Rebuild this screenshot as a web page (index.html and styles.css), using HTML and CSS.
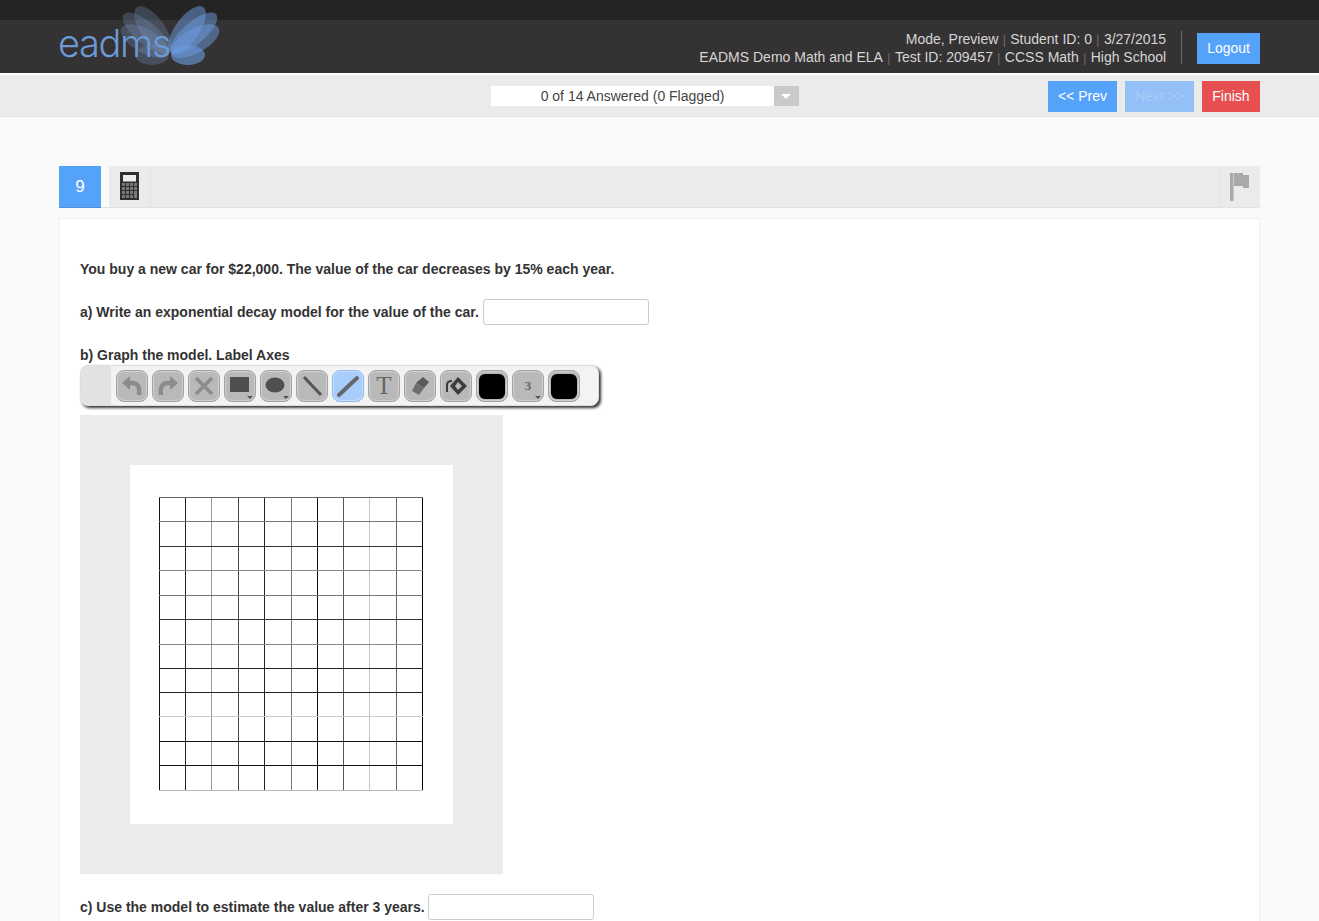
FILE: index.html
```html
<!DOCTYPE html>
<html lang="en">
<head>
    <meta charset="UTF-8">
    <meta name="viewport" content="width=device-width, initial-scale=1.0">
    <title>EADMS Test</title>
    <link rel="stylesheet" href="styles.css">
</head>
<body>
    <div class="topStrip"></div>
    <header class="mainHeader">
        <div class="logo">
            <svg class="logoWings" width="104" height="70" viewBox="120 0 104 70">
                <g fill="#7f9fd2" opacity="0.9">
                    <ellipse cx="153" cy="30" rx="12" ry="28" opacity="0.3" transform="rotate(-35 153 30)"/>
                    <ellipse cx="146" cy="33" rx="11" ry="29" opacity="0.3" transform="rotate(-50 146 33)"/>
                    <ellipse cx="145" cy="41" rx="12" ry="27" opacity="0.3" transform="rotate(-61 145 41)"/>
                    <ellipse cx="152" cy="55" rx="17" ry="10" opacity="0.3"/>
                </g>
                <g fill="#6b9ce0">
                    <ellipse cx="187" cy="30" rx="12" ry="28" opacity="0.5" transform="rotate(35 187 30)"/>
                    <ellipse cx="194" cy="33" rx="11" ry="29" opacity="0.5" transform="rotate(50 194 33)"/>
                    <ellipse cx="195" cy="41" rx="12" ry="27" opacity="0.5" transform="rotate(61 195 41)"/>
                    <ellipse cx="188" cy="55" rx="17" ry="10" opacity="0.6"/>
                </g>
            </svg>
            <span class="logoText">eadms</span>
        </div>
        <div class="headerRight">
            <div class="testMeta">
                <div>Mode, Preview<span class="sep">|</span>Student ID: 0<span class="sep">|</span>3/27/2015</div>
                <div>EADMS Demo Math and ELA<span class="sep">|</span>Test ID: 209457<span class="sep">|</span>CCSS Math<span class="sep">|</span>High School</div>
            </div>
            <div class="headerDivider"></div>
            <button class="btn btnBlue">Logout</button>
        </div>
    </header>

    <div class="navBar">
        <div class="answeredSelect">
            <span class="answeredText">0 of 14 Answered (0 Flagged)</span>
            <span class="selectArrow"></span>
        </div>
        <div class="navButtons">
            <button class="btn btnBlue">&lt;&lt; Prev</button>
            <button class="btn btnDisabled">Next &gt;&gt;</button>
            <button class="btn btnRed">Finish</button>
        </div>
    </div>

    <main class="content">
        <div class="tabBar">
            <div class="tabNumber">9</div>
            <div class="tabTool">
                <svg width="19" height="28" viewBox="0 0 19 28">
                    <rect width="19" height="28" fill="#2f2f2f"/>
                    <rect x="3" y="3" width="13" height="6.500" fill="#ececec"/>
                    <g fill="#777">
                        <rect x="2" y="11" width="3" height="3"/><rect x="6" y="11" width="3" height="3"/><rect x="10" y="11" width="3" height="3"/><rect x="14" y="11" width="3" height="3"/>
                        <rect x="2" y="15" width="3" height="3"/><rect x="6" y="15" width="3" height="3"/><rect x="10" y="15" width="3" height="3"/><rect x="14" y="15" width="3" height="3"/>
                        <rect x="2" y="19" width="3" height="3"/><rect x="6" y="19" width="3" height="3"/><rect x="10" y="19" width="3" height="3"/><rect x="14" y="19" width="3" height="7"/>
                        <rect x="2" y="23" width="3" height="3"/><rect x="6" y="23" width="3" height="3"/><rect x="10" y="23" width="3" height="3"/>
                    </g>
                </svg>
            </div>
            <div class="tabFlag">
                <svg width="20" height="28" viewBox="0 0 20 28">
                    <rect x="0" y="0" width="3.500" height="28" fill="#a9a9a9"/>
                    <path d="M4 0H13V2H19V15H13V13H4Z" fill="#a9a9a9"/>
                </svg>
            </div>
        </div>

        <section class="questionCard">
            <p class="questionText">You buy a new car for $22,000. The value of the car decreases by 15% each year.</p>
            <p class="questionText partA">a) Write an exponential decay model for the value of the car. <input type="text" class="answerInput"></p>
            <p class="questionText partB">b) Graph the model. Label Axes</p>

            <div class="drawToolbar">
                <div class="toolbarHandle"></div>
                <div class="toolBtn">
                    <svg width="24" height="24" viewBox="0 0 24 24"><path d="M2 9L10 2V16Z" fill="#8c8c8c"/><path d="M8 9H12C18 9 20 13 19 21" stroke="#8c8c8c" stroke-width="4.500" fill="none"/></svg>
                </div>
                <div class="toolBtn">
                    <svg width="24" height="24" viewBox="0 0 24 24"><path d="M22 9L14 2V16Z" fill="#8c8c8c"/><path d="M16 9H12C6 9 4 13 5 21" stroke="#8c8c8c" stroke-width="4.500" fill="none"/></svg>
                </div>
                <div class="toolBtn">
                    <svg width="24" height="24" viewBox="0 0 24 24"><path d="M4 4L20 20M20 4L4 20" stroke="#8c8c8c" stroke-width="3.500" fill="none"/></svg>
                </div>
                <div class="toolBtn hasMenu">
                    <svg width="24" height="24" viewBox="0 0 24 24"><rect x="2" y="3" width="19" height="15" fill="#4f4f4f"/></svg>
                </div>
                <div class="toolBtn hasMenu">
                    <svg width="24" height="24" viewBox="0 0 24 24"><ellipse cx="11" cy="11" rx="9.500" ry="7.500" fill="#4f4f4f"/></svg>
                </div>
                <div class="toolBtn">
                    <svg width="24" height="24" viewBox="0 0 24 24"><path d="M4 3L21 21" stroke="#555" stroke-width="3" fill="none"/></svg>
                </div>
                <div class="toolBtn toolActive">
                    <svg width="24" height="24" viewBox="0 0 24 24"><path d="M3 21L21 4" stroke="#666" stroke-width="4" stroke-linecap="round" fill="none"/></svg>
                </div>
                <div class="toolBtn toolLabel toolLetter">T</div>
                <div class="toolBtn">
                    <svg width="24" height="24" viewBox="0 0 24 24"><path d="M15 3L21 8L16 14L8 9Z" fill="#5a5a5a"/><path d="M8 9L16 14L11 21L4 17Z" fill="#6e6e6e"/></svg>
                </div>
                <div class="toolBtn">
                    <svg width="24" height="24" viewBox="0 0 24 24"><path d="M14 3L23 12L14 21L6 12ZM14 8L11 12L14 16L18 12Z" fill-rule="evenodd" fill="#3c3c3c"/><path d="M3 18V11C3 9 4 7 8 7" stroke="#3c3c3c" stroke-width="2" fill="none"/></svg>
                </div>
                <div class="toolBtn toolColor"><span class="colorSwatch"></span></div>
                <div class="toolBtn hasMenu toolLabel toolWidth">3</div>
                <div class="toolBtn toolColor"><span class="colorSwatch"></span></div>
            </div>

            <div class="drawArea">
                <div class="drawPage">
                    <svg class="gridSvg" width="266" height="296" viewBox="0 0 266 296" shape-rendering="crispEdges">
                        <g stroke-width="1">
                            <line x1="0.500" y1="0" x2="0.500" y2="294" stroke="#111"/>
                            <line x1="26.500" y1="0" x2="26.500" y2="294" stroke="#222"/>
                            <line x1="52.500" y1="0" x2="52.500" y2="294" stroke="#999"/>
                            <line x1="79.500" y1="0" x2="79.500" y2="294" stroke="#444"/>
                            <line x1="105.500" y1="0" x2="105.500" y2="294" stroke="#222"/>
                            <line x1="132.500" y1="0" x2="132.500" y2="294" stroke="#777"/>
                            <line x1="158.500" y1="0" x2="158.500" y2="294" stroke="#111"/>
                            <line x1="184.500" y1="0" x2="184.500" y2="294" stroke="#555"/>
                            <line x1="210.500" y1="0" x2="210.500" y2="294" stroke="#c4c4c4"/>
                            <line x1="237.500" y1="0" x2="237.500" y2="294" stroke="#666"/>
                            <line x1="263.500" y1="0" x2="263.500" y2="294" stroke="#000"/>
                            <line x1="0" y1="0.500" x2="264" y2="0.500" stroke="#666"/>
                            <line x1="0" y1="24.500" x2="264" y2="24.500" stroke="#777"/>
                            <line x1="0" y1="49.500" x2="264" y2="49.500" stroke="#333"/>
                            <line x1="0" y1="73.500" x2="264" y2="73.500" stroke="#888"/>
                            <line x1="0" y1="98.500" x2="264" y2="98.500" stroke="#777"/>
                            <line x1="0" y1="122.500" x2="264" y2="122.500" stroke="#333"/>
                            <line x1="0" y1="147.500" x2="264" y2="147.500" stroke="#888"/>
                            <line x1="0" y1="171.500" x2="264" y2="171.500" stroke="#222"/>
                            <line x1="0" y1="195.500" x2="264" y2="195.500" stroke="#222"/>
                            <line x1="0" y1="219.500" x2="264" y2="219.500" stroke="#ccc"/>
                            <line x1="0" y1="244.500" x2="264" y2="244.500" stroke="#111"/>
                            <line x1="0" y1="268.500" x2="264" y2="268.500" stroke="#111"/>
                            <line x1="0" y1="293.500" x2="264" y2="293.500" stroke="#bbb"/>
                        </g>
                    </svg>
                </div>
            </div>

            <p class="questionText partC">c) Use the model to estimate the value after 3 years. <input type="text" class="answerInput"></p>
        </section>
    </main>
</body>
</html>
```

FILE: styles.css
```css
body {
    margin: 0;
    height: 921px;
    overflow: hidden;
    background-color: #fafafa;
    color: #333;
    font-family: "Liberation Sans", Arial, sans-serif;
    font-size: 14px;
}

.topStrip {
    height: 20px;
    background-color: #242424;
}

.mainHeader {
    position: relative;
    height: 53px;
    padding: 0 59px;
    background-color: #343233;
    border-bottom: 2px solid #fff;
    display: flex;
    justify-content: flex-end;
    align-items: center;
}

.logo {
    position: absolute;
    left: 59px;
    top: -13px;
    width: 162px;
    height: 66px;
}

.logoText {
    position: absolute;
    left: -1px;
    top: 13px;
    font-family: Inter, sans-serif;
    font-weight: 300;
    font-size: 38px;
    line-height: 46px;
    letter-spacing: -1.4px;
    color: #6c9ad6;
}

.logoWings {
    position: absolute;
    left: 61px;
    top: -7px;
}

.headerRight {
    display: flex;
    align-items: center;
    margin-top: 4px;
}

.testMeta {
    margin-top: -2px;
    text-align: right;
    line-height: 18px;
    color: #d6d6d6;
}

.headerDivider {
    width: 1px;
    height: 33px;
    margin: -3px 15px 0;
    background-color: #6a6a6a;
}

.sep {
    color: #6f6f6f;
    font-size: 12px;
    line-height: 1;
    margin: 0 4.4px;
}

.btn {
    height: 31px;
    padding: 0 10px 2px;
    border: none;
    color: #fff;
    font-family: "Liberation Sans", Arial, sans-serif;
    font-size: 14px;
}

.btnBlue {
    background-color: #55a2fb;
}

.btnDisabled {
    background-color: #92c0f7;
    color: #a9cdf8;
}

.btnRed {
    background-color: #e84f50;
    min-width: 58px;
}

.navBar {
    position: relative;
    height: 41px;
    padding: 0 59px;
    background-color: #ebebeb;
    border-bottom: 1px solid #e2e2e2;
    display: flex;
    justify-content: flex-end;
    align-items: center;
}

.answeredSelect {
    position: absolute;
    left: 491px;
    top: 11px;
    width: 308px;
    height: 20px;
    background-color: #fff;
    display: flex;
}

.answeredText {
    flex: 1;
    text-align: center;
    line-height: 21px;
    color: #444;
}

.selectArrow {
    position: relative;
    width: 25px;
    background-color: #c9c9c9;
}

.selectArrow::after {
    content: "";
    position: absolute;
    left: 7px;
    top: 8px;
    border-left: 5px solid transparent;
    border-right: 5px solid transparent;
    border-top: 5px solid #fff;
}

.navButtons {
    display: flex;
    gap: 8px;
    margin-top: 2px;
}

.content {
    padding: 49px 59px 0;
}

.tabBar {
    height: 41px;
    background-color: #ebebeb;
    border-bottom: 1px solid #e2e2e2;
    display: flex;
}

.tabNumber {
    width: 42px;
    height: 41px;
    background-color: #55a2fb;
    border-bottom: 1px solid #4f8fdc;
    color: #fff;
    font-size: 17px;
    line-height: 42px;
    text-align: center;
}

.tabTool {
    margin-left: 8px;
    width: 42px;
    border-right: 1px solid #e2e2e2;
    display: flex;
    justify-content: center;
    padding-top: 6px;
    box-sizing: border-box;
    background-color: #ebebeb;
    box-shadow: -8px 0 0 #fafafa;
}

.tabFlag {
    margin-left: auto;
    width: 41px;
    border-left: 1px solid #e2e2e2;
    box-sizing: border-box;
    padding: 7px 0 0 10px;
}

.questionCard {
    margin-top: 10px;
    height: 720px;
    padding: 0 20px;
    background-color: #fff;
    border: 1px solid #f0f0f0;
}

.questionText {
    margin: 0;
    font-size: 14px;
    font-weight: bold;
    line-height: 18px;
    color: #333;
}

.questionCard > .questionText:first-child {
    margin-top: 41px;
}

.partA {
    margin-top: 21px;
    height: 26px;
    display: flex;
    align-items: center;
    white-space: pre;
}

.partB {
    margin-top: 21px;
}

.partC {
    margin-top: 20px;
    height: 26px;
    display: flex;
    align-items: center;
    white-space: pre;
}

.partC .answerInput {
    margin-left: -1px;
}

.answerInput {
    width: 166px;
    height: 26px;
    box-sizing: border-box;
    margin: 0;
    background-color: #fff;
    border: 1px solid #ccc;
    border-radius: 3px;
}

.drawToolbar {
    width: 519px;
    height: 41px;
    margin-top: 1px;
    box-sizing: border-box;
    padding-top: 4px;
    background-color: #f3f3f3;
    border: 1px solid #dedede;
    border-radius: 8px;
    box-shadow: 2px 2px 3px #333;
    display: flex;
    gap: 4px;
}

.toolbarHandle {
    width: 30px;
    height: 39px;
    margin: -4px 1px 0 0;
    background-color: #e2e2e2;
    border-radius: 7px 0 0 7px;
}

.toolBtn {
    position: relative;
    width: 32px;
    height: 32px;
    box-sizing: border-box;
    background-color: #b9b9b9;
    border: 1px solid #a3a3a3;
    border-radius: 8px;
    box-shadow: inset 0 0 0 1px #d0d0d0;
    display: flex;
    align-items: center;
    justify-content: center;
}

.toolActive {
    background-color: #a8cdfa;
    border-color: #8fb8ec;
    box-shadow: inset 0 0 0 1px #c6e0ff;
}

.toolLabel {
    font-family: "Liberation Serif", serif;
    color: #666;
}

.toolLetter {
    font-size: 25px;
}

.toolWidth {
    font-size: 13px;
    font-weight: bold;
}

.hasMenu::after {
    content: "";
    position: absolute;
    right: 2px;
    bottom: 2px;
    border-left: 3px solid transparent;
    border-right: 3px solid transparent;
    border-top: 3px solid #555;
}

.colorSwatch {
    width: 26px;
    height: 25px;
    background-color: #000;
    border-radius: 6px;
}

.drawArea {
    width: 423px;
    height: 459px;
    margin-top: 9px;
    padding: 50px;
    box-sizing: border-box;
    background-color: #ebebeb;
}

.drawPage {
    width: 323px;
    height: 359px;
    padding: 32px 0 0 29px;
    box-sizing: border-box;
    background-color: #fff;
}

.gridSvg {
    display: block;
}
```
